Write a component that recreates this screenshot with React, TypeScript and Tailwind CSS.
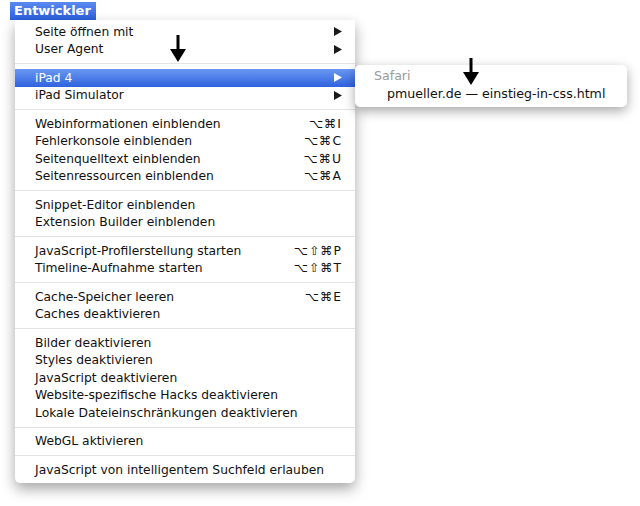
import React from "react";

type Item = { label: string; shortcut?: string; submenu?: boolean; active?: boolean };

const groups: Item[][] = [
  [{ label: "Seite öffnen mit", submenu: true }, { label: "User Agent", submenu: true }],
  [{ label: "iPad 4", submenu: true, active: true }, { label: "iPad Simulator", submenu: true }],
  [
    { label: "Webinformationen einblenden", shortcut: "⌥⌘I" },
    { label: "Fehlerkonsole einblenden", shortcut: "⌥⌘C" },
    { label: "Seitenquelltext einblenden", shortcut: "⌥⌘U" },
    { label: "Seitenressourcen einblenden", shortcut: "⌥⌘A" },
  ],
  [{ label: "Snippet-Editor einblenden" }, { label: "Extension Builder einblenden" }],
  [
    { label: "JavaScript-Profilerstellung starten", shortcut: "⌥⇧⌘P" },
    { label: "Timeline-Aufnahme starten", shortcut: "⌥⇧⌘T" },
  ],
  [{ label: "Cache-Speicher leeren", shortcut: "⌥⌘E" }, { label: "Caches deaktivieren" }],
  [
    { label: "Bilder deaktivieren" },
    { label: "Styles deaktivieren" },
    { label: "JavaScript deaktivieren" },
    { label: "Website-spezifische Hacks deaktivieren" },
    { label: "Lokale Dateieinschränkungen deaktivieren" },
  ],
  [{ label: "WebGL aktivieren" }],
  [{ label: "JavaScript von intelligentem Suchfeld erlauben" }],
];

const Tri = ({ white }: { white?: boolean }) => (
  <svg width="8" height="9" viewBox="0 0 8 9">
    <path d="M0 0 L8 4.5 L0 9 Z" fill={white ? "#ffffff" : "#1a1a1a"} />
  </svg>
);

const BigArrow = () => (
  <svg width="18" height="27" viewBox="0 0 18 27">
    <rect x="7.5" y="0" width="3" height="15" fill="#000" />
    <path d="M1 14 L17 14 L9 27 Z" fill="#000" />
  </svg>
);

const Row = ({ item }: { item: Item }) => (
  <div
    className={`flex items-center h-[17.5px] pl-[20px] pr-[13px] ${
      item.active ? "bg-gradient-to-b from-[#6a97f2] to-[#2f62de] text-white" : "text-[#111]"
    }`}>
    <span className="flex-1 whitespace-nowrap">{item.label}</span>
    {item.shortcut && <span className="tracking-[1px]">{item.shortcut}</span>}
    {item.submenu && <Tri white={item.active} />}
  </div>
);

export default function App() {
  return (
    <div
      className="w-[640px] h-[506px] bg-white overflow-hidden"
      style={{ fontFamily: '"DejaVu Sans", "Noto Sans", sans-serif' }}>
      <div className="flex pt-[2px] pl-[10px]">
        <div className="flex items-center h-[18px] px-[4px] w-[86px] bg-gradient-to-b from-[#5a8af0] to-[#2c5fdc] text-white text-[13px] font-bold">
          Entwickler
        </div>
      </div>
      <div className="relative ml-[15px] w-[340px]">
        <div className="bg-white rounded-b-[5px] pt-[3px] pb-[4px] text-[12.3px] shadow-[0_6px_14px_rgba(0,0,0,0.35)]">
          {groups.map((g, gi) => (
            <div key={gi}>
              {gi > 0 && (
                <div className="h-[11px] flex items-center">
                  <div className="h-px w-full bg-[#e4e4e4]" />
                </div>
              )}
              {g.map((it) => (
                <Row key={it.label} item={it} />
              ))}
            </div>
          ))}
        </div>

        {/* Submenu */}
        <div className="absolute left-[340px] top-[45px] w-[272px] bg-white rounded-[5px] pt-[3px] pb-[4px] text-[12.6px] shadow-[0_4px_12px_rgba(0,0,0,0.35)]">
          <div className="h-[17.5px] flex items-center pl-[19px] text-[#9a9a9a]">Safari</div>
          <div className="h-[17.5px] flex items-center pl-[32px] text-[#111] whitespace-nowrap">
            pmueller.de — einstieg-in-css.html
          </div>
        </div>

        {/* Pointer arrows */}
        <div className="absolute left-[154px] top-[15px]">
          <BigArrow />
        </div>
        <div className="absolute left-[447px] top-[38px]">
          <BigArrow />
        </div>
      </div>
    </div>
  );
}
